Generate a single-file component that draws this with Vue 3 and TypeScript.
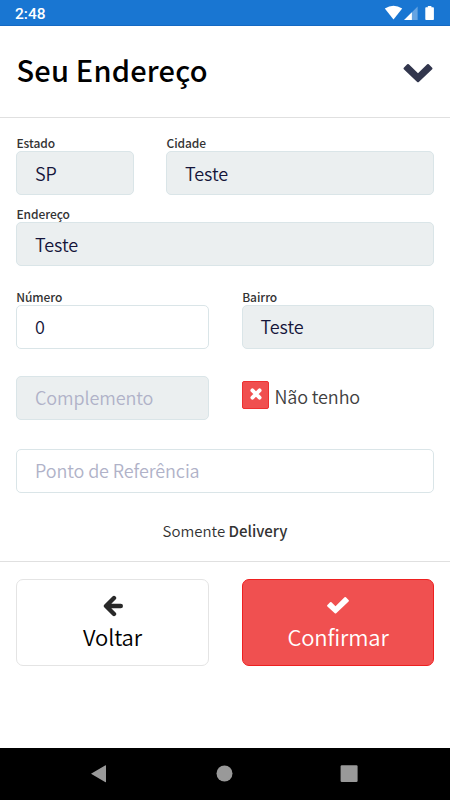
<script setup lang="ts">
interface Field {
  id: string
  label?: string
  value?: string
  placeholder?: string
  readonly: boolean
}

const fields: Field[] = [
  { id: 'estado', label: 'Estado', value: 'SP', readonly: true },
  { id: 'cidade', label: 'Cidade', value: 'Teste', readonly: true },
  { id: 'endereco', label: 'Endereço', value: 'Teste', readonly: true },
  { id: 'numero', label: 'Número', value: '0', readonly: false },
  { id: 'bairro', label: 'Bairro', value: 'Teste', readonly: true },
  { id: 'complemento', placeholder: 'Complemento', readonly: true },
]
const rows: Field[][] = [fields.slice(0, 2), fields.slice(2, 3), fields.slice(3, 5)]
const complemento = fields[5]
</script>

<template>
  <div class="screen">
    <div class="status">
      <span class="clock">2:48</span>
      <svg class="status-icons" width="52" height="18" viewBox="0 0 52 18">
        <path d="M.8 4.4Q9.500-1.400 18.200 4.400L9.500 15.200Z" transform="translate(0 .2)" fill="#fff" />
        <path d="M33 2.500V16H19.500Z" transform="translate(.6 0)" fill="#66a4e2" />
        <path d="M27.300 8.200V16H19.500Z" transform="translate(.6 0)" fill="#fff" />
        <path d="M43.200 2h3.600v1.200h1.700q.8 0 .8.800v11.200q0 .8-.8.800h-7q-.8 0-.8-.8V4q0-.8.8-.8h1.700z" transform="translate(.6 0)" fill="#fff" />
      </svg>
    </div>

    <header class="header">
      <h1>Seu Endereço</h1>
      <svg class="chevron" width="30" height="20" viewBox="0 0 30 20">
        <path d="M.8 4.700 4.200 1.300Q5 .6 5.800 1.300L15 10.300 24.200 1.300Q25 .6 25.800 1.300L29.200 4.700Q29.900 5.500 29.200 6.300L15.800 19Q15 19.700 14.200 19L.8 6.300Q.1 5.500.8 4.700Z" fill="#32364d" />
      </svg>
    </header>

    <main class="form">
      <div v-for="(row, i) in rows" :key="i" class="row" :class="`row-${i}`">
        <div v-for="field in row" :key="field.id" class="field">
          <div class="label">{{ field.label }}</div>
          <div class="input" :class="{ readonly: field.readonly }">{{ field.value }}</div>
        </div>
      </div>
      <div class="row row-extra">
        <div class="input readonly placeholder">{{ complemento.placeholder }}</div>
        <div class="none">
          <div class="check">
            <svg width="14" height="14" viewBox="0 0 14 14">
              <path d="M3.400 3.400 10.600 10.600M10.600 3.400 3.400 10.600" stroke="#fff" stroke-width="3.900" stroke-linecap="round" />
            </svg>
          </div>
          <span>Não tenho</span>
        </div>
      </div>
      <div class="input placeholder reference">Ponto de Referência</div>
      <p class="notice">Somente <b>Delivery</b></p>
    </main>

    <footer class="actions">
      <div class="button">
        <svg width="22" height="22" viewBox="0 0 22 22">
          <path d="M12 3 4 11 12 19M4.500 11H18.800" fill="none" stroke="#292929" stroke-width="4.400" stroke-linecap="round" stroke-linejoin="round" />
        </svg>
        <span>Voltar</span>
      </div>
      <div class="button primary">
        <svg width="22" height="22" viewBox="0 0 22 22">
          <path d="M.4 10.600 3.100 7.900Q3.800 7.300 4.500 7.900L8.500 11.900 17.500 2.900Q18.200 2.200 18.900 2.900L21.600 5.600Q22.200 6.300 21.600 7L9.200 18.900Q8.500 19.500 7.800 18.900L.4 12Q-.2 11.300.4 10.600Z" transform="translate(0 -.6)" fill="#fff" />
        </svg>
        <span>Confirmar</span>
      </div>
    </footer>

    <nav class="nav">
      <svg width="18" height="20" viewBox="0 0 18 20"><path d="M1 9.700 15.500 1.200Q16 1 16 1.700V17.800Q16 18.500 15.500 18.200Z" fill="#999" /></svg>
      <svg width="18" height="18" viewBox="0 0 18 18"><circle cx="9.500" cy="8.500" r="8" fill="#999" /></svg>
      <svg width="18" height="18" viewBox="0 0 18 18"><rect x=".6" y=".2" width="17" height="16.800" rx="1.200" fill="#999" /></svg>
    </nav>
  </div>
</template>

<style>
body {
  margin: 0;
  background: #fff;
}
</style>

<style scoped>
* {
  box-sizing: border-box;
}
.screen {
  width: 450px;
  height: 800px;
  display: flex;
  flex-direction: column;
  background: #fff;
  font-family: "Noto Sans CJK SC", "Open Sans", sans-serif;
  font-weight: 350;
}
.status {
  height: 26px;
  flex: none;
  padding: 0 14px 0 15px;
  display: flex;
  justify-content: space-between;
  background: #1976d2;
  border-bottom: 1px solid #1469c3;
}
.clock {
  font: 500 15.5px/28px Roboto, sans-serif;
  color: #fff;
}
.status-icons {
  margin-top: 4px;
}
.header {
  height: 92px;
  flex: none;
  padding: 0 17px 0 16.5px;
  display: flex;
  align-items: center;
  justify-content: space-between;
  border-bottom: 1px solid #e0e0e0;
}
h1 {
  margin: -5px 0 0;
  font-size: 29px;
  letter-spacing: 0.2px;
  line-height: 40px;
  font-weight: 500;
  color: #000;
}
.chevron {
  margin-top: 3px;
}
.form {
  height: 443px;
  flex: none;
  padding: 18px 16px 0;
}
.row {
  display: grid;
  grid-template-columns: 193px 192px;
  column-gap: 33px;
}
.row-0 {
  grid-template-columns: 118px 268px;
  column-gap: 32px;
}
.row-1 {
  grid-template-columns: 418px;
  margin-top: 12px;
}
.row-2 {
  margin-top: 24px;
}
.label {
  height: 15px;
  padding-left: 0.5px;
  font-size: 12px;
  line-height: 13px;
  font-weight: 450;
  letter-spacing: -0.08px;
  color: #333;
}
.row-2 .label {
  padding-left: 0.2px;
}
.input {
  height: 44px;
  padding-left: 18px;
  border: 1px solid #dae5e8;
  border-radius: 5px;
  background: #fff;
  font-size: 18px;
  line-height: 42px;
  letter-spacing: -0.1px;
  color: #15153a;
  white-space: nowrap;
}
.readonly {
  background: #ebeff0;
}
.placeholder {
  color: #b0b2c8;
}
.row-2 .input,
.row-extra .input,
.reference {
  line-height: 41px;
}
.row-2 .field:last-child .input {
  padding-left: 17.5px;
}
.row-extra {
  margin-top: 27px;
}
.none {
  display: flex;
  padding-top: 5px;
  font-size: 18px;
  line-height: 30px;
  letter-spacing: -0.12px;
  color: #404040;
}
.check {
  width: 27px;
  height: 28px;
  margin-right: 5.5px;
  padding-bottom: 3px;
  display: flex;
  align-items: center;
  justify-content: center;
  background: #f05050;
  border: 1px solid #ee3131;
  border-radius: 2px;
}
.reference {
  margin-top: 29px;
}
.notice {
  margin: 26px 0 0;
  text-align: center;
  font-size: 15px;
  line-height: 24px;
  color: #333;
}
.notice b {
  font-weight: 500;
}
.actions {
  flex: 1;
  padding: 17px 16px 0;
  display: grid;
  grid-template-columns: 193px 192px;
  column-gap: 33px;
  align-items: start;
  border-top: 1px solid #e0e0e0;
}
.button {
  height: 87px;
  padding-top: 15px;
  display: flex;
  flex-direction: column;
  align-items: center;
  border: 1px solid #e4e4e4;
  border-radius: 7px;
  font-size: 22px;
  line-height: 32px;
  letter-spacing: -0.15px;
  color: #000;
}
.button span {
  margin-top: 3px;
}
.primary {
  background: #f05050;
  border-color: #ee2020;
  color: #fff;
}
.nav {
  height: 52px;
  flex: none;
  padding: 0 92px 0 90px;
  display: flex;
  align-items: center;
  justify-content: space-between;
  background: #000;
}
</style>
